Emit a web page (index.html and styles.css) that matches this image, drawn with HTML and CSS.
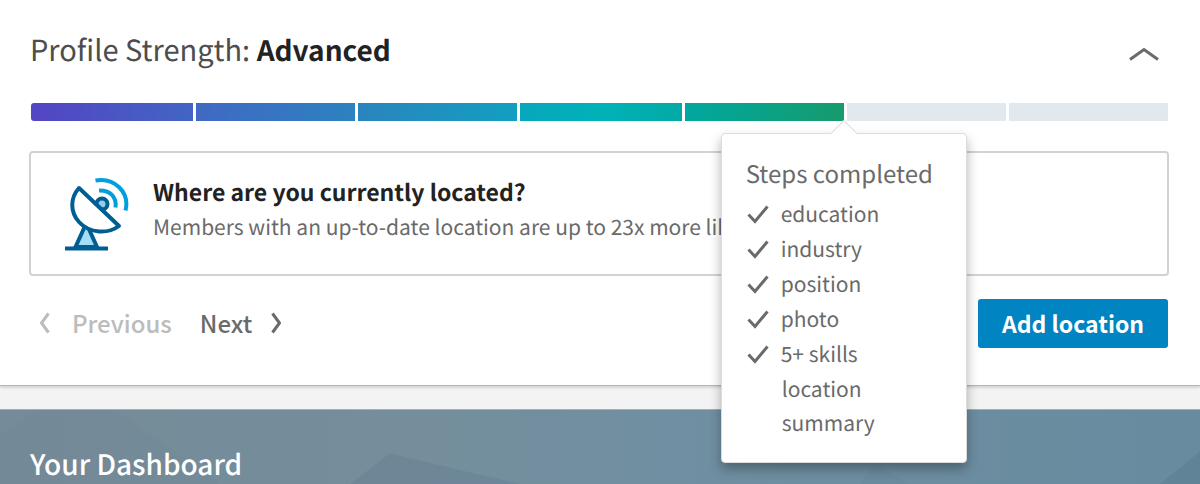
FILE: index.html
```
<!DOCTYPE html>
<html lang="en">
<head>
    <meta charset="UTF-8">
    <meta name="viewport" content="width=device-width, initial-scale=1.0">
    <title>Profile Strength</title>
    <link rel="stylesheet" href="styles.css">
</head>
<body>
    <section class="profile-strength">
        <header class="strength-header">
            <h2 class="strength-title">Profile Strength: <strong>Advanced</strong></h2>
            <button class="collapse" type="button" aria-label="Collapse">
                <svg width="32" height="16" viewBox="0 0 32 16"><path d="M2 13.500 L16 3.500 L30 13.500"/></svg>
            </button>
        </header>

        <div class="meter">
            <div class="segment seg-1"></div>
            <div class="segment seg-2"></div>
            <div class="segment seg-3"></div>
            <div class="segment seg-4"></div>
            <div class="segment seg-5">
                <div class="steps">
                    <h3 class="steps-title">Steps completed</h3>
                    <ul class="steps-list">
                        <li class="done"><svg class="check" viewBox="0 0 22 20"><path d="M1.500 9.500 L8 16.500 L20.500 1.500"/></svg>education</li>
                        <li class="done"><svg class="check" viewBox="0 0 22 20"><path d="M1.500 9.500 L8 16.500 L20.500 1.500"/></svg>industry</li>
                        <li class="done"><svg class="check" viewBox="0 0 22 20"><path d="M1.500 9.500 L8 16.500 L20.500 1.500"/></svg>position</li>
                        <li class="done"><svg class="check" viewBox="0 0 22 20"><path d="M1.500 9.500 L8 16.500 L20.500 1.500"/></svg>photo</li>
                        <li class="done"><svg class="check" viewBox="0 0 22 20"><path d="M1.500 9.500 L8 16.500 L20.500 1.500"/></svg>5+ skills</li>
                        <li>location</li>
                        <li>summary</li>
                    </ul>
                </div>
            </div>
            <div class="segment"></div>
            <div class="segment"></div>
        </div>

        <div class="question">
            <svg class="dish" width="66" height="74" viewBox="0 0 66 74">
                <path d="M20 49 L10.500 70 H32 L23 50" fill="#a5dcf6" stroke="#005e93" stroke-width="4"/>
                <circle cx="37" cy="27" r="5.500" fill="#8ecff0" stroke="#005e93" stroke-width="4"/>
                <path d="M14 11 C5 21 5 35 14 45 C25 57 43 57 54 49 Z" fill="#fff" stroke="#005e93" stroke-width="4" stroke-linejoin="round"/>
                <path d="M0 71.500 H43" fill="none" stroke="#005e93" stroke-width="4"/>
                <path d="M34 13.500 C45 13 52 20 50.500 30.500" fill="none" stroke="#00a0dc" stroke-width="4"/>
                <path d="M30.500 3.500 C49 0 65 15 60.500 33.500" fill="none" stroke="#00a0dc" stroke-width="4"/>
            </svg>
            <div class="question-text">
                <h3>Where are you currently located?</h3>
                <p>Members with an up-to-date location are up to 23x more likely</p>
            </div>
        </div>

        <div class="actions">
            <button class="pager previous" type="button" disabled>
                <svg width="10" height="22" viewBox="0 0 10 22"><path d="M8.500 1.500 L1.500 11 L8.500 20.500"/></svg>
                Previous
            </button>
            <button class="pager next" type="button">
                Next
                <svg width="10" height="22" viewBox="0 0 10 22"><path d="M1.500 1.500 L8.500 11 L1.500 20.500"/></svg>
            </button>
            <button class="add-location" type="button">Add location</button>
        </div>
    </section>

    <section class="dashboard">
        <svg class="facets" viewBox="0 0 1200 75" preserveAspectRatio="none">
            <path d="M0 25 L38 0 H115 L220 75 H0 Z" fill="#60778b" opacity="0.08"/>
            <path d="M350 75 L390 44 L520 75 Z" fill="#5f7890" opacity="0.3"/>
            <path d="M875 55 L910 75 H860 Z" fill="#5f7890" opacity="0.15"/>
            <path d="M1160 75 L1200 42 V75 Z" fill="#55788f" opacity="0.4"/>
        </svg>
        <h2 class="dashboard-title">Your Dashboard</h2>
    </section>
</body>
</html>
```
FILE: styles.css
```
* {
    box-sizing: border-box;
}
body {
    margin: 0;
    background-color: #f3f3f3;
    color: #6a6a6a;
    font-family: "Noto Sans CJK SC", "Noto Sans", sans-serif;
    text-rendering: geometricPrecision;
    overflow: hidden;
}
h2, h3, p, ul {
    margin: 0;
    padding: 0;
    font-weight: 400;
}
button {
    padding: 0;
    border: 0;
    background: none;
    color: inherit;
    font-family: inherit;
    cursor: pointer;
}
svg {
    display: block;
    flex: none;
}
.profile-strength {
    padding: 29px 32px 37px 30px;
    background-color: #fff;
    box-shadow: 0 1px 0 #b2b6b6, 0 3px 2px #d6d6d6;
}
.strength-header {
    display: flex;
    justify-content: space-between;
    align-items: center;
}
.strength-title {
    color: #4d4d4d;
    font-size: 29px;
    line-height: 40px;
}
.strength-title strong {
    color: #222;
    font-size: 28px;
    font-weight: 700;
}
.collapse {
    padding-top: 8px;
    margin-right: 8px;
}
.collapse svg, .pager svg, .check {
    fill: none;
    stroke: currentColor;
    stroke-width: 3;
}
.meter {
    display: grid;
    grid-template-columns: 162fr 159fr 159fr 161fr 159fr 159fr 159fr;
    gap: 3px;
    height: 18px;
    margin: 33px 0 0 1px;
}
.segment {
    position: relative;
    background-color: #e1e8ee;
}
.seg-1 {
    border-radius: 3px 0 0 3px;
    background: linear-gradient(100deg, #5444c4, #4166c3);
}
.seg-2 {
    background: linear-gradient(100deg, #4168c4, #2c82bf);
}
.seg-3 {
    background: linear-gradient(100deg, #2b84be, #129fc0);
}
.seg-4 {
    background: linear-gradient(100deg, #08a7bd, #00b2b8 50%, #03aaa4);
}
.seg-5 {
    background: linear-gradient(100deg, #00a8a0, #169b6c);
}
/* popup hangs from the end of the last completed step */
.steps {
    position: absolute;
    z-index: 1;
    top: 30px;
    left: 100%;
    width: 246px;
    padding: 20px 24px 22px;
    border: 1px solid #ddd;
    border-radius: 4px;
    background-color: #fff;
    box-shadow: 0 6px 12px rgba(0, 0, 0, 0.3);
    transform: translateX(-50%);
}
.steps::before {
    content: "";
    position: absolute;
    top: -10px;
    left: 50%;
    width: 19px;
    height: 19px;
    margin-left: -10px;
    border-top: 1px solid #ddd;
    border-left: 1px solid #ddd;
    background-color: #fff;
    transform: rotate(45deg);
}
.steps-title {
    position: relative;
    font-size: 24px;
    line-height: 38px;
}
.steps-list {
    margin-top: 5px;
    list-style: none;
    font-size: 21px;
    line-height: 34px;
}
.steps-list li {
    display: flex;
    align-items: center;
    gap: 12px;
    padding-left: 36px;
}
.steps-list .done {
    padding-left: 1px;
    line-height: 35px;
}
.check {
    width: 22px;
    height: 20px;
}
.question {
    display: flex;
    align-items: center;
    height: 125px;
    margin: 30px -1px 0;
    padding: 0 34px;
    border: 2px solid #d2d2d2;
    border-radius: 4px;
}
.question-text {
    margin-left: 22px;
    padding-bottom: 10px;
    font-size: 21px;
    line-height: 36px;
    white-space: nowrap;
}
.question-text h3 {
    color: #222;
    font-size: 23px;
    font-weight: 700;
}
.actions {
    display: flex;
    align-items: center;
    margin-top: 23px;
    padding-left: 10px;
}
.pager {
    display: flex;
    align-items: center;
    gap: 22px;
    padding-bottom: 2px;
    font-size: 24px;
    line-height: 36px;
    font-weight: 500;
}
.previous {
    color: #bcbcbc;
}
.next {
    gap: 19px;
    margin-left: 28px;
}
.add-location {
    width: 190px;
    height: 49px;
    padding-bottom: 2px;
    margin-left: auto;
    border-radius: 3px;
    background-color: #0084c2;
    color: #fff;
    font-size: 23px;
    font-weight: 700;
}
.dashboard {
    display: grid;
    height: 75px;
    margin-top: 24px;
    border-top: 1px solid #a5adb2;
    background: linear-gradient(90deg, #758b99, #758e9b 33%, #708fa1 55%, #688b9f);
}
.facets {
    grid-area: 1 / 1;
    width: 100%;
    height: 74px;
}
.dashboard-title {
    grid-area: 1 / 1;
    padding: 34px 30px 0;
    color: #fff;
    font-size: 28px;
    font-weight: 500;
    line-height: 40px;
}
```
